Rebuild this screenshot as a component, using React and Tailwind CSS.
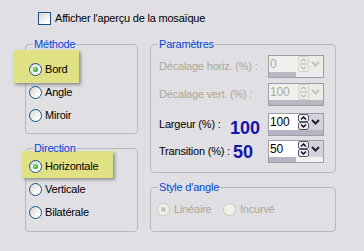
import React from "react";

function Radio({ checked, disabled }) {
  return (
    <span
      className={`relative inline-block shrink-0 w-[13px] h-[13px] rounded-full border ${
        disabled
          ? "border-[#cac8bb] bg-[#f1f0ea]"
          : "border-[#1c5180] bg-[linear-gradient(135deg,#d4d4ce,#ffffff_80%)]"
      }`}
    >
      {checked && (
        <span
          className={`absolute left-[3px] top-[3px] w-[5px] h-[5px] rounded-full ${
            disabled
              ? "bg-[#cac8bb]"
              : "bg-[radial-gradient(circle_at_40%_40%,#8fe88f,#21a121_75%)]"
          }`}
        />
      )}
    </span>
  );
}

function RadioRow({ label, checked, disabled, highlight }) {
  return (
    <div className="relative h-[23px] flex items-center pl-[3px]">
      {highlight}
      <div className="relative z-10 flex items-center gap-[3px]">
        <Radio checked={checked} disabled={disabled} />
        <span className={disabled ? "text-[#aca899]" : "text-black"}>{label}</span>
      </div>
    </div>
  );
}

function SpinArrows({ disabled }) {
  const bs = disabled ? "#d2d2cc" : "#55556a";
  const bf = disabled ? "#efefe9" : "#ececf2";
  const ar = disabled ? "#c4c4bc" : "#111111";
  const df = disabled ? "#ecece6" : "#d3d3de";
  return (
    <svg width="25" height="16" viewBox="0 0 25 16" className="shrink-0">
      <rect x="0.5" y="0.5" width="10" height="7" rx="1.5" fill={bf} stroke={bs} />
      <rect x="0.5" y="8.5" width="10" height="7" rx="1.5" fill={bf} stroke={bs} />
      <path d="M3 5.5 L5.5 3 L8 5.5" fill="none" stroke={ar} strokeWidth="1.5" />
      <path d="M3 10.5 L5.5 13 L8 10.5" fill="none" stroke={ar} strokeWidth="1.5" />
      <rect x="11" y="0" width="14" height="16" fill={df} />
      <path d="M14 6 L17.5 9.5 L21 6" fill="none" stroke={disabled ? "#c4c4bc" : "#222233"} strokeWidth="2" />
    </svg>
  );
}

function Spin({ value, pct, disabled }) {
  return (
    <div className="w-[56px] h-[23px] border border-[#9d9da8] flex flex-col shrink-0">
      <div className={`h-[16px] flex ${disabled ? "bg-[#f0f0ee]" : "bg-white"}`}>
        <span
          className={`flex-1 pl-[1px] text-[12px] leading-[16px] ${
            disabled ? "text-[#aca899]" : "text-black"
          }`}
        >
          {value}
        </span>
        <SpinArrows disabled={disabled} />
      </div>
      <div className={`h-[5px] flex ${disabled ? "bg-[#ececec]" : "bg-[#f2f2f2]"}`}>
        <div
          style={{ width: pct + "%" }}
          className={disabled ? "bg-[#b8b8c2]" : "bg-[#b4b4c2]"}
        />
      </div>
    </div>
  );
}

function Group({ title, className, children }) {
  return (
    <fieldset className={`border border-[#b9b9bd] rounded-[4px] ${className}`}>
      <legend className="relative z-20 ml-[7px] px-[1px] text-[#0046d5] leading-[13px]">{title}</legend>
      {children}
    </fieldset>
  );
}

export default function App() {
  return (
    <div
      className="w-[364px] h-[251px] bg-[#e0dfe3] pt-[12px] text-[11px] leading-[13px] tracking-[-0.2px] overflow-hidden"
      style={{ fontFamily: '"Liberation Sans", Arial, sans-serif' }}
    >
      <div className="flex items-center gap-[4px] pl-[38px] h-[13px]">
        <span className="w-[13px] h-[13px] border border-[#1c5180] bg-[linear-gradient(135deg,#d4d4ce,#ffffff_80%)] shrink-0" />
        <span className="text-black">Afficher l'aperçu de la mosaïque</span>
      </div>

      <div className="flex pl-[25px] gap-[12px] mt-[13px]">
        <div className="flex flex-col w-[113px]">
          <Group title="Méthode" className="h-[96px]">
            <div className="pt-[7px]">
              <RadioRow
                label="Bord"
                checked
                highlight={
                  <div className="absolute z-0 left-[-13px] top-[-8px] w-[66px] h-[33px] bg-[#e0e184] shadow-[2px_2px_3px_rgba(0,0,0,0.35)]" />
                }
              />
              <RadioRow label="Angle" />
              <RadioRow label="Miroir" />
            </div>
          </Group>
          <Group title="Direction" className="h-[90px] mt-[8px]">
            <RadioRow
              label="Horizontale"
              checked
              highlight={
                <div className="absolute z-0 left-[-4px] top-[-4px] w-[91px] h-[27px] bg-[#e0e184] shadow-[2px_2px_3px_rgba(0,0,0,0.35)]" />
              }
            />
            <RadioRow label="Verticale" />
            <RadioRow label="Bilatérale" />
          </Group>
        </div>

        <div className="flex flex-col w-[186px]">
          <Group title="Paramètres" className="h-[135px]">
            <div className="pt-[4px] pl-[8px]">
              <div className="flex items-center h-[23px]">
                <span className="w-[109px] text-[#aca899]">Décalage horiz. (%) :</span>
                <Spin value="0" pct={50} disabled />
              </div>
              <div className="flex items-center h-[23px] mt-[5px]">
                <span className="w-[109px] text-[#aca899]">Décalage vert. (%) :</span>
                <Spin value="100" pct={100} disabled />
              </div>
              <div className="flex items-center h-[23px] mt-[7px]">
                <span className="w-[71px] text-black">Largeur (%) :</span>
                <span className="w-[38px] pt-[6px] text-[18px] leading-[18px] font-bold text-[#1414a8] tracking-normal">100</span>
                <Spin value="100" pct={100} />
              </div>
              <div className="flex items-center h-[23px] mt-[4px]">
                <span className="w-[74px] text-black">Transition (%) :</span>
                <span className="w-[35px] text-[18px] leading-[18px] font-bold text-[#1414a8] tracking-normal">50</span>
                <Spin value="50" pct={50} />
              </div>
            </div>
          </Group>
          <Group title="Style d'angle" className="h-[51px] mt-[8px]">
            <div className="flex items-center h-[23px] pt-[4px] pl-[6px] box-content">
              <div className="flex items-center gap-[4px] w-[66px]">
                <Radio checked disabled />
                <span className="text-[#aca899]">Linéaire</span>
              </div>
              <div className="flex items-center gap-[4px]">
                <Radio disabled />
                <span className="text-[#aca899]">Incurvé</span>
              </div>
            </div>
          </Group>
        </div>
      </div>
    </div>
  );
}
